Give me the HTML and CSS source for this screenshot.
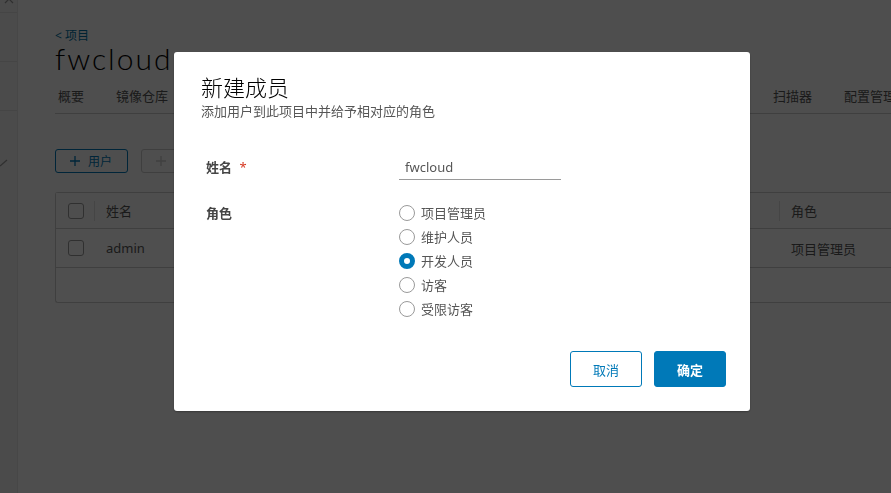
FILE: index.html
```html
<!DOCTYPE html>
<html lang="zh-CN">
  <head>
    <meta charset="UTF-8" />
    <meta name="viewport" content="width=device-width, initial-scale=1.0" />
    <title>新建成员</title>
    <link rel="stylesheet" href="styles.css">
  </head>
  <body>
    <div class="app">
      <div class="sidebar">
        <div class="side-top">
          <svg width="12" height="8" viewBox="0 0 12 8"><path d="M2 6 L6 2 L10 6" fill="none" stroke="#999" stroke-width="1.2"/></svg>
        </div>
        <div class="side-row"></div>
        <div class="side-row"></div>
        <div class="side-check">
          <svg width="8" height="8" viewBox="0 0 8 8"><path d="M0 7 L7 1" fill="none" stroke="#999" stroke-width="1.2"/></svg>
        </div>
      </div>

      <div class="main">
        <a class="back">&lt; 项目</a>
        <h1 class="project-name">fwcloud</h1>

        <ul class="tabs">
          <li>概要</li>
          <li>镜像仓库</li>
          <li class="push">扫描器</li>
          <li>配置管理</li>
        </ul>

        <div class="actions">
          <button class="btn-outline">
            <svg class="plus" width="10" height="10" viewBox="0 0 10 10"><path d="M5 0 V10 M0 5 H10" stroke="currentColor" stroke-width="1.3"/></svg>用户
          </button>
          <button class="btn-outline disabled">
            <svg class="plus" width="10" height="10" viewBox="0 0 10 10"><path d="M5 0 V10 M0 5 H10" stroke="currentColor" stroke-width="1.3"/></svg>组
          </button>
        </div>

        <div class="grid">
          <div class="grid-row grid-head">
            <span class="cb"></span>
            <span class="sep"></span>
            <span class="cell name">姓名</span>
            <span class="sep"></span>
            <span class="cell">角色</span>
          </div>
          <div class="grid-row">
            <span class="cb"></span>
            <span class="sep blank"></span>
            <span class="cell name">admin</span>
            <span class="sep blank"></span>
            <span class="cell">项目管理员</span>
          </div>
          <div class="grid-foot"></div>
        </div>
      </div>
    </div>

    <div class="backdrop">
      <div class="modal">
        <h3 class="modal-title">新建成员</h3>
        <p class="modal-sub">添加用户到此项目中并给予相对应的角色</p>

        <form class="form">
          <label class="form-label">姓名 <span class="req">*</span></label>
          <div class="form-field">
            <input class="text-input" type="text" value="fwcloud">
          </div>

          <label class="form-label">角色</label>
          <div class="form-field radios">
            <label class="radio"><span class="dot"></span>项目管理员</label>
            <label class="radio"><span class="dot"></span>维护人员</label>
            <label class="radio checked"><span class="dot"></span>开发人员</label>
            <label class="radio"><span class="dot"></span>访客</label>
            <label class="radio"><span class="dot"></span>受限访客</label>
          </div>
        </form>

        <div class="modal-footer">
          <button class="btn btn-secondary">取消</button>
          <button class="btn btn-primary">确定</button>
        </div>
      </div>
    </div>
  </body>
</html>
```

FILE: styles.css
```css
* {
  box-sizing: border-box;
}

body {
  margin: 0;
  height: 493px;
  overflow: hidden;
  font-family: "Noto Sans", "Noto Sans CJK SC", sans-serif;
  color: #565656;
  background: #fafafa;
}

.app {
  display: flex;
  height: 100%;
}

.sidebar {
  width: 18px;
  background: #f0f0f0;
  border-right: 1px solid #e6e6e6;
}

.side-top {
  height: 16px;
  padding-left: 3px;
  border-bottom: 1px solid #ddd;
}

.side-top svg {
  display: block;
  margin-top: -3px;
}

.side-row {
  height: 49px;
  border-bottom: 1px solid #ddd;
}

.side-check {
  margin-top: 48px;
}

.side-check svg {
  display: block;
}

.main {
  flex: 1;
  padding: 28px 0 0 37px;
  background: #fafafa;
  overflow: hidden;
  white-space: nowrap;
}

.back {
  display: block;
  font-size: 12px;
  line-height: 16px;
  color: #0072a3;
}

.project-name {
  margin: 0;
  font-family: "Lato", "Noto Sans", sans-serif;
  font-weight: 300;
  font-size: 30px;
  line-height: 28px;
  letter-spacing: 2px;
  color: #000;
}

.tabs {
  display: flex;
  margin: 8px 0 0;
  padding: 0 0 0 3px;
  list-style: none;
  border-bottom: 1px solid #ccc;
}

.tabs li {
  margin-right: 32px;
  font-size: 13px;
  line-height: 33px;
  color: #565656;
}

.tabs li.push {
  margin-left: 573px;
}

.actions {
  display: flex;
  gap: 13px;
  margin-top: 35px;
}

.btn-outline {
  display: flex;
  align-items: center;
  height: 24px;
  padding: 0 15px 0 14px;
  border: 1px solid #0079b8;
  border-radius: 3px;
  background: transparent;
  color: #0079b8;
  font-family: inherit;
  font-size: 12px;
}

.btn-outline .plus {
  margin-right: 8px;
}

.btn-outline.disabled {
  border-color: #ccc;
  color: #ccc;
}

.grid {
  margin-top: 19px;
  border: 1px solid #ccc;
  border-right: none;
  border-radius: 3px 0 0 3px;
  background: #fff;
}

.grid-row {
  display: flex;
  align-items: center;
  height: 37px;
  border-bottom: 1px solid #e8e8e8;
  font-size: 13px;
}

.grid-head {
  height: 36px;
  background: #fafafa;
  border-bottom-color: #ccc;
}

.grid-row + .grid-row {
  height: 39px;
  border-bottom-color: #ccc;
}

.cb {
  width: 16px;
  height: 16px;
  margin-left: 12px;
  border: 1px solid #9a9a9a;
  border-radius: 3px;
}

.sep {
  width: 1px;
  height: 20px;
  margin-left: 10px;
  background: #ddd;
}

.sep.blank {
  background: transparent;
}

.cell {
  padding-left: 11px;
  color: #565656;
}

.cell.name {
  width: 674px;
}

.grid-foot {
  height: 34px;
}

/* modal */

.backdrop {
  position: fixed;
  inset: 0;
  background: rgba(0, 0, 0, 0.69);
  padding: 52px 0 0 174px;
}

.modal {
  width: 576px;
  height: 359px;
  padding: 20px 24px 24px 27px;
  background: #fff;
  border-radius: 3px;
  box-shadow: 0 1px 2px rgba(0, 0, 0, 0.3);
  display: flex;
  flex-direction: column;
}

.modal-title {
  margin: 0;
  font-weight: 300;
  font-size: 22px;
  line-height: 30px;
  color: #000;
}

.modal-sub {
  margin: 0;
  font-size: 13px;
  line-height: 18px;
  color: #565656;
}

.form {
  display: grid;
  grid-template-columns: 193px 1fr;
  row-gap: 21px;
  margin-top: 35px;
  padding-left: 5px;
}

.form-label {
  font-size: 13px;
  font-weight: bold;
  line-height: 24px;
  color: #454545;
}

.req {
  color: #d6361f;
  font-weight: normal;
  margin-left: 4px;
}

.text-input {
  width: 162px;
  height: 24px;
  border: none;
  border-bottom: 1px solid #9a9a9a;
  padding: 0 6px;
  font-family: inherit;
  font-size: 13px;
  color: #565656;
  outline: none;
}

.radios {
  display: flex;
  flex-direction: column;
}

.radio {
  display: flex;
  align-items: center;
  height: 24px;
  font-size: 13px;
  color: #565656;
}

.radio .dot {
  width: 16px;
  height: 16px;
  margin-right: 6px;
  border: 1px solid #9a9a9a;
  border-radius: 50%;
  background: #fff;
}

.radio.checked .dot {
  border: 5.5px solid #0079b8;
  background: #fff;
}

.modal-footer {
  display: flex;
  justify-content: flex-end;
  gap: 12px;
  margin-top: auto;
}

.btn {
  width: 72px;
  height: 36px;
  border-radius: 3px;
  font-family: inherit;
  font-size: 13px;
}

.btn-secondary {
  border: 1px solid #0079b8;
  background: #fff;
  color: #0079b8;
}

.btn-primary {
  border: 1px solid #0079b8;
  background: #0079b8;
  color: #fff;
  font-weight: bold;
}
```
